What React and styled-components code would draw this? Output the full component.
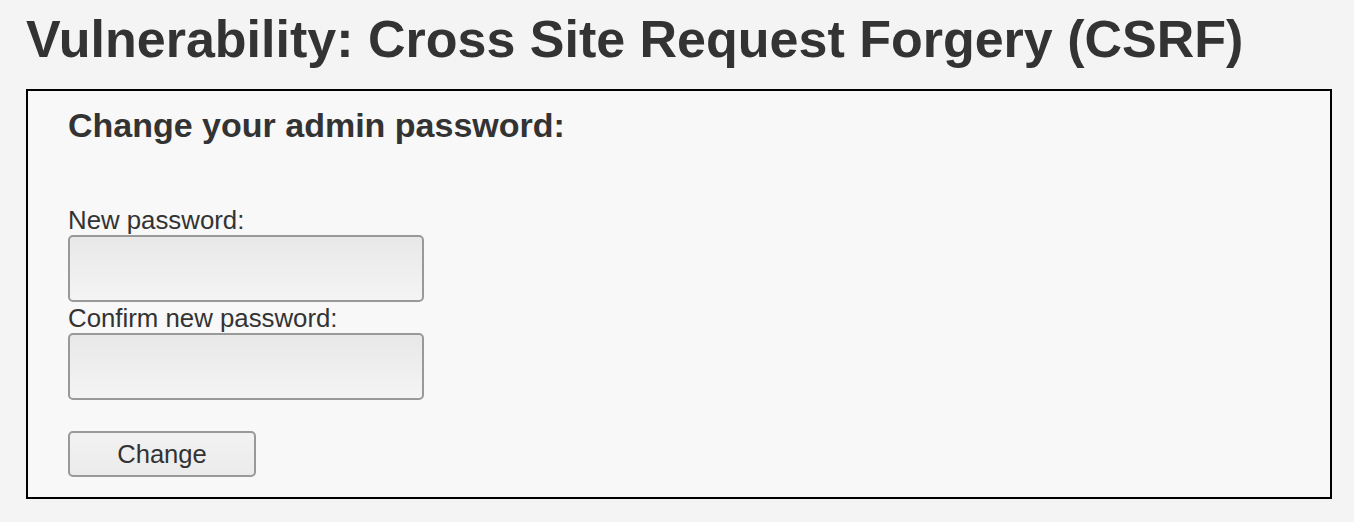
import React from "react";
import styled, { createGlobalStyle } from "styled-components";

const Global = createGlobalStyle`
  html, body { margin: 0; padding: 0; background: #f4f4f4; }
  body { font-family: "Liberation Sans", Arial, sans-serif; color: #333; }
`;

const Page = styled.div`
  padding: 9px 22px 0 26px;
`;

const Title = styled.h1`
  margin: 0 0 20px;
  font-size: 52px;
  line-height: 60px;
  font-weight: bold;
  color: #333;
`;

const Box = styled.div`
  border: 2px solid #000;
  background: #f7f8f7;
  padding: 14px 40px 20px;
`;

const Heading = styled.h3`
  margin: 0 0 59px;
  font-size: 34px;
  line-height: 40px;
  font-weight: bold;
  color: #333;
`;

const Form = styled.form`
  display: flex;
  flex-direction: column;
  align-items: flex-start;
`;

const Label = styled.label`
  display: block;
  padding-top: 1px;
  font-size: 25.8px;
  line-height: 30px;
  color: #333;
`;

const Input = styled.input`
  box-sizing: border-box;
  width: 356px;
  height: 67px;
  margin: 0;
  border: 2px solid #999;
  border-radius: 5px;
  background: linear-gradient(to bottom, #e8e8e8, #f4f4f4);
  font-size: 25.6px;
  padding: 0 8px;
  outline: none;
`;

const Button = styled.button`
  box-sizing: border-box;
  margin-top: 31px;
  width: 188px;
  height: 46px;
  border: 2px solid #999;
  border-radius: 5px;
  background: linear-gradient(to bottom, #f2f2f2, #ebebeb);
  font-family: "Liberation Sans", Arial, sans-serif;
  font-size: 25.6px;
  color: #333;
  padding: 0;
  cursor: pointer;
`;

export default function App() {
  return (
    <>
      <Global />
      <Page>
        <Title>Vulnerability: Cross Site Request Forgery (CSRF)</Title>
        <Box>
          <Heading>Change your admin password:</Heading>
          <Form onSubmit={(e) => e.preventDefault()}>
            <Label htmlFor="pw1">New password:</Label>
            <Input id="pw1" type="password" />
            <Label htmlFor="pw2">Confirm new password:</Label>
            <Input id="pw2" type="password" />
            <Button type="submit">Change</Button>
          </Form>
        </Box>
      </Page>
    </>
  );
}
